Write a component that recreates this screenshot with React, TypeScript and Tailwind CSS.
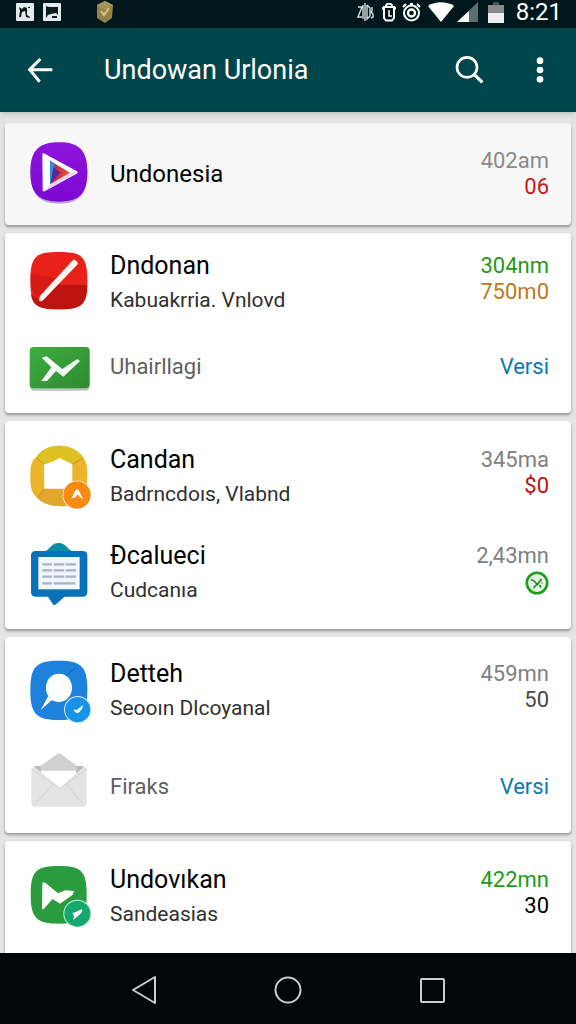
import type { ReactNode } from "react";
import { clsx } from "clsx";

const svgClass = "block size-[60px] overflow-visible";

const PlayIcon = () => (
  <svg viewBox="87 72 180 180" className={svgClass}>
    <defs>
      <linearGradient id="play-bg" x1="0" y1="0" x2="0" y2="1">
        <stop offset="0" stopColor="#8e14dc" />
        <stop offset="1" stopColor="#7c08d2" />
      </linearGradient>
      <linearGradient id="play-core" x1="0" y1="0" x2="1" y2="0">
        <stop offset="0" stopColor="#b3175e" />
        <stop offset="1" stopColor="#f0532a" />
      </linearGradient>
    </defs>
    <path d="M177 73C236 73 262 96 262 160C262 226 236 251 177 251C118 251 92 226 92 160C92 96 118 73 177 73Z" fill="#5a0f96" opacity=".35" />
    <path d="M177 67C236 67 262 90 262 156C262 222 236 245 177 245C118 245 91 222 91 156C91 90 118 67 177 67Z" fill="url(#play-bg)" />
    <path d="M131 104L229 157L132 210Z" fill="#fff" stroke="#fff" strokeWidth="8" strokeLinejoin="round" />
    <path d="M152 192L212 158L231 157L134 213Z" fill="#e5d3f5" />
    <path d="M150 122L210 158L150 193Z" fill="url(#play-core)" />
    <path d="M150 122L164 131L160 165L150 193Z" fill="#2b8fdc" />
    <path d="M160 142L182 158L152 190Z" fill="#5a2a96" />
  </svg>
);

const SlashIcon = () => (
  <svg viewBox="87 54 180 180" className={svgClass}>
    <path d="M177 51C246 51 262 64 262 137C262 208 246 223 177 223C107 223 91 208 91 137C91 64 107 51 177 51Z" fill="#e8211a" />
    <path d="M262 150C261 210 244 223 177 223C118 223 98 214 93 178L124 196L172 150Z" fill="#bd120e" />
    <path d="M92 118C130 120 150 128 176 130L118 184C100 188 92 160 92 118Z" fill="#d61a15" />
    <path d="M219 75C224 72 236 82 233 88L130 195C124 201 114 200 118 190C119 184 122 180 126 176Z" fill="#fff5f3" />
  </svg>
);

const ChartIcon = () => (
  <svg viewBox="87 306 180 180" className={svgClass}>
    <defs>
      <linearGradient id="chart-bg" x1="0" y1="0" x2="1" y2="1">
        <stop offset="0" stopColor="#3fae3f" />
        <stop offset="1" stopColor="#2d8a31" />
      </linearGradient>
    </defs>
    <rect x="91" y="343" width="177" height="124" rx="12" fill="#0b3d0e" opacity=".3" />
    <rect x="89" y="336" width="180" height="124" rx="12" fill="url(#chart-bg)" />
    <path d="M125 368L140 364L187 402L232 372L240 378L190 425L168 408L141 438L124 438L154 397Z" fill="#f4fbf2" />
  </svg>
);

const HouseIcon = () => (
  <svg viewBox="87 66 180 180" className={svgClass}>
    <path d="M175 62C205 61 235 74 249 97C262 110 264 140 261 170C258 205 245 240 200 243C165 245 130 240 112 219C93 205 90 180 91 150C91 125 95 105 108 97C125 72 150 62 175 62Z" fill="#ecb42a" />
    <path d="M108 98C125 72 150 62 175 62C205 61 235 74 249 97L216 117L178 99L132 120Z" fill="#dec224" />
    <path d="M112 217L133 190L200 195L205 243C165 245 130 240 112 219Z" fill="#e2a62c" />
    <path d="M108 98L133 119M250 98L217 118M112 217L134 190" stroke="#c58f1c" strokeWidth="3" />
    <path d="M132 119L160 109L179 99L217 118V191H133Z" fill="#fff" />
    <circle cx="231" cy="210" r="43" fill="#fff" />
    <circle cx="231" cy="210" r="41" fill="#f68a12" />
    <path d="M214 221L227 195Q232 190 236 196L249 221L240 217L232 208L227 217Z" fill="#fff" />
  </svg>
);

const NotesIcon = () => (
  <svg viewBox="87 354 180 180" className={svgClass}>
    <path d="M130 380C148 378 152 354 176 354C200 354 203 378 222 380Z" fill="#0f8ba6" />
    <path d="M107 378H248Q262 378 262 392V500Q262 515 248 515H194L166 539Q162 541 158 537L144 515H107Q93 515 93 500V392Q93 378 107 378Z" fill="#0a72b8" />
    <rect x="115" y="396" width="124" height="97" fill="#f1f7fc" />
    <g stroke="#a9b2c6" strokeWidth="7">
      <path d="M127 418H156M161 418H193M197 418H228M127 436H156M161 436H193M197 436H228M127 455H156M161 455H193M197 455H228M127 475H156M161 475H226" />
    </g>
  </svg>
);

const SearchBubbleIcon = () => (
  <svg viewBox="87 63 180 180" className={svgClass}>
    <path d="M177 62C245 62 262 80 262 150C262 222 246 240 177 240C108 240 91 222 91 150C91 80 108 62 177 62Z" fill="#1e82dd" />
    <path d="M196 110L230 80" stroke="#0c62ad" strokeWidth="3" />
    <path d="M177 101C200 101 216 119 216 143C216 168 198 186 176 186C168 186 160 183 155 181L122 210L145 168C139 160 138 152 138 143C138 119 154 101 177 101Z" fill="#fff" />
    <circle cx="233" cy="209" r="41" fill="#d6efff" />
    <circle cx="233" cy="209" r="38" fill="#1893e8" />
    <path d="M221 208L230 210L249 195L246 208L234 220Q224 219 221 208Z" fill="#fff" />
  </svg>
);

const EnvelopeIcon = () => (
  <svg viewBox="87 351 180 180" className={svgClass}>
    <path d="M103 378L123 378V400L103 388ZM228 378H250V390L228 400Z" fill="#b9b9b9" />
    <path d="M122 378L172 341Q177 338 182 341L230 378V394H122Z" fill="#d0d0d0" />
    <path d="M122 392H230L180 444Z" fill="#fff" />
    <path d="M94 392Q94 380 105 382L180 443L250 382Q260 380 260 390V488Q260 500 248 500H106Q94 500 94 488Z" fill="#e3e3e3" />
    <path d="M104 494L158 434M250 494L200 432" stroke="#d2d2d2" strokeWidth="3" />
    <path d="M96 388L180 445L258 388" fill="none" stroke="#d4d4d4" strokeWidth="3" />
  </svg>
);

const ArrowIcon = () => (
  <svg viewBox="87 81 180 180" className={svgClass}>
    <path d="M177 78C240 78 260 90 260 162C260 236 244 251 177 251C110 251 92 236 92 162C92 90 112 78 177 78Z" fill="#2a9c3f" />
    <path d="M127 130Q130 124 136 128L174 160L196 151L222 153L218 164L180 191L158 177L131 207L126 208Z" fill="#fff" />
    <circle cx="232" cy="221" r="42" fill="#c5f2de" />
    <circle cx="232" cy="221" r="39" fill="#16a86c" />
    <path d="M217 219L226 217L245 208Q250 214 240 223L220 240L222 228Z" fill="#fff" />
  </svg>
);

const CheckMark = () => (
  <svg viewBox="0 0 24 24" role="img" aria-label="Done" className="my-px inline-block size-6">
    <circle cx="12" cy="12" r="10.2" fill="#e4f7e2" stroke="#1f9a27" strokeWidth="2.6" />
    <path d="M6 9.5Q8 8 10 11L12.5 13.5L16.5 8M12 13L8.5 17M14.5 14L16 16.5M17 11.5V12.5" fill="none" stroke="#27802b" strokeWidth="1.6" />
  </svg>
);

interface Item {
  icon: ReactNode;
  title: string;
  subtitle?: string;
  muted?: boolean;
  top?: string;
  topColor?: string;
  bottom?: ReactNode;
  bottomColor?: string;
  action?: string;
}

const cards: { className: string; items: Item[] }[] = [
  {
    className: "bg-[#f7f7f7] py-[17px]",
    items: [
      { icon: <PlayIcon />, title: "Undonesia", top: "402am", topColor: "text-[#8a8a8a]", bottom: "06", bottomColor: "text-[#cc1616]" },
    ],
  },
  {
    className: "bg-white gap-4 pt-4 pb-3",
    items: [
      { icon: <SlashIcon />, title: "Dndonan", subtitle: "Kabuakrria. Vnlovd", top: "304nm", topColor: "text-[#1f9a14]", bottom: "750m0", bottomColor: "text-[#c07a1c]" },
      { icon: <ChartIcon />, title: "Uhairllagi", muted: true, action: "Versi" },
    ],
  },
  {
    className: "bg-white gap-7 py-[22px]",
    items: [
      { icon: <HouseIcon />, title: "Candan", subtitle: "Badrncdoıs, Vlabnd", top: "345ma", topColor: "text-[#808080]", bottom: "$0", bottomColor: "text-[#bd1212]" },
      { icon: <NotesIcon />, title: "Đcalueci", subtitle: "Cudcanıa", top: "2,43mn", topColor: "text-[#808080]", bottom: <CheckMark /> },
    ],
  },
  {
    className: "bg-white gap-7 pt-5 pb-3",
    items: [
      { icon: <SearchBubbleIcon />, title: "Detteh", subtitle: "Seooın Dlcoyanal", top: "459mn", topColor: "text-[#808080]", bottom: "50", bottomColor: "text-[#4a4a4a]" },
      { icon: <EnvelopeIcon />, title: "Firaks", muted: true, action: "Versi" },
    ],
  },
  {
    className: "bg-white pt-[22px] pb-8",
    items: [
      { icon: <ArrowIcon />, title: "Undovıkan", subtitle: "Sandeasias", top: "422mn", topColor: "text-[#1f9a14]", bottom: "30", bottomColor: "text-black" },
    ],
  },
];

function Row({ item }: { item: Item }) {
  return (
    <li className="flex min-h-[68px] items-center gap-[21px]">
      <div className="shrink-0">{item.icon}</div>
      <div className="min-w-0 flex-1">
        <h2
          className={clsx(
            "truncate leading-[34px]",
            item.muted ? "text-[22px] text-[#606060]" : item.subtitle ? "text-[25px] text-black" : "text-2xl text-black"
          )}
        >
          {item.title}
        </h2>
        {item.subtitle && <p className="truncate text-[21px] leading-[34px] text-[#303030]">{item.subtitle}</p>}
      </div>
      {item.action ? (
        <button type="button" className="text-[22px] leading-[34px] text-[#0c79b5]">{item.action}</button>
      ) : (
        <div className={clsx("text-right text-[22px] leading-[26px]", item.subtitle && "self-start pt-1")}>
          <p className={item.topColor}>{item.top}</p>
          <p className={item.bottomColor}>{item.bottom}</p>
        </div>
      )}
    </li>
  );
}

function StatusBar() {
  return (
    <div className="flex h-7 shrink-0 items-center justify-between bg-[#00171b] pr-[14px] pb-1 pl-4 text-white">
      <div className="flex items-center">
        <svg viewBox="0 0 18 18" className="size-[18px]">
          <rect width="18" height="18" rx="1" fill="#e3eaee" />
          <path d="M3 4L6 6L8 4L11 5V12L14 14V15L10 14L9 8L6 9L5 14H3L4 8ZM12 4H14V5H12Z" fill="#101b20" />
        </svg>
        <svg viewBox="0 0 18 18" className="ml-[9px] size-[18px]">
          <rect width="18" height="18" rx="1" fill="#e3eaee" />
          <path d="M3 3L6 4H15V12L13 10L8 11L5 12L3 15ZM9 13H14V15H9Z" fill="#101b20" />
        </svg>
        <svg viewBox="0 0 18 22" className="ml-[35px] h-[22px] w-[18px]">
          <path d="M9 0L17 4L16 17L9 22L1 17V4Z" fill="#94824a" />
          <path d="M9 0L17 4L9 9L1 4Z" fill="#a8955a" />
          <path d="M5 10L8 14L13 7" fill="none" stroke="#d3c084" strokeWidth="2" />
        </svg>
      </div>
      <div className="flex items-center">
        <svg viewBox="0 0 17 20" className="h-5 w-[17px]" fill="none" stroke="#d5dee0" strokeWidth="1.4">
          <path d="M1 5H5L1 15H5M6 3V17M8 1V19M10 3V17L13 14V6L10 3M15 5V9L14 10L16 12V15L14 16" />
        </svg>
        <svg viewBox="0 0 14 19" className="ml-[8px] h-[19px] w-[14px]">
          <path d="M2 4H12V15L10 17.5H4L2 15ZM4 3C4 0 10 0 10 3M0 6L2 4M14 6L12 4" fill="none" stroke="#fff" strokeWidth="2" />
          <path d="M7 7V13H10" fill="none" stroke="#fff" strokeWidth="1.5" />
        </svg>
        <svg viewBox="0 0 19 20" className="ml-[6px] h-5 w-[19px]" fill="none" stroke="#fff">
          <circle cx="9.5" cy="11" r="7.5" strokeWidth="2" />
          <circle cx="9.5" cy="11" r="3.5" strokeWidth="2.4" />
          <path d="M1 5L4 2M15 2L18 5M8 2H11" strokeWidth="2" />
        </svg>
        <svg viewBox="0 0 26 20" className="ml-[7px] h-5 w-[26px]">
          <path d="M0 4C7 -1 19 -1 26 4L13 20Z" fill="#fff" />
        </svg>
        <svg viewBox="0 0 21 20" className="ml-[3px] h-5 w-[21px]">
          <path d="M21 0V20H0Z" fill="#5d6e72" />
          <path d="M12 9V20H0Z" fill="#fff" />
        </svg>
        <svg viewBox="0 0 16 21" className="ml-[10px] h-[21px] w-4">
          <path d="M0 3H16V21H0Z" fill="#87898a" />
          <path d="M0 11H16V21H0Z" fill="#f2eeee" />
          <path d="M5 0H11V3H5Z" fill="#3c5658" />
        </svg>
        <span className="ml-3 text-2xl leading-6">8:21</span>
      </div>
    </div>
  );
}

function AppBar() {
  return (
    <header className="z-10 flex h-[84px] shrink-0 items-center bg-[#00464b] px-6 text-white shadow-md">
      <button type="button" aria-label="Back">
        <svg viewBox="72 162 96 96" className="size-8" fill="none" stroke="#fff" strokeWidth="9">
          <path d="M157 209H90M121 177L89 209L119 245" />
        </svg>
      </button>
      <h1 className="ml-12 flex-1 truncate text-[27px] leading-9">Undowan Urlonia</h1>
      <div className="flex gap-11">
        <button type="button" aria-label="Search">
          <svg viewBox="498 165 90 90" className="size-[30px]" fill="none" stroke="#fff" strokeWidth="8">
            <circle cx="537" cy="202" r="30" />
            <path d="M559 224L583 247" strokeWidth="10" />
          </svg>
        </button>
        <button type="button" aria-label="More options">
          <svg viewBox="719 165 72 90" className="h-[30px] w-6" fill="#fff">
            <circle cx="755" cy="182" r="10" />
            <circle cx="755" cy="210" r="10" />
            <circle cx="755" cy="238" r="10" />
          </svg>
        </button>
      </div>
    </header>
  );
}

function NavBar() {
  return (
    <nav className="z-10 flex h-[71px] shrink-0 items-center justify-center bg-[#00080a]">
      <button type="button" aria-label="Back" className="flex w-1/4 justify-center">
        <svg viewBox="0 0 28 30" className="h-[30px] w-7" fill="none" stroke="#c9cdcd" strokeWidth="2" strokeLinejoin="round">
          <path d="M3 16L25 3V29Z" />
        </svg>
      </button>
      <button type="button" aria-label="Home" className="flex w-1/4 justify-center">
        <svg viewBox="0 0 30 30" className="size-[30px]" fill="none" stroke="#c9cdcd" strokeWidth="2">
          <circle cx="15" cy="16" r="12.5" />
        </svg>
      </button>
      <button type="button" aria-label="Recent apps" className="flex w-1/4 justify-center">
        <svg viewBox="0 0 30 30" className="size-[30px]" fill="none" stroke="#c9cdcd" strokeWidth="2">
          <rect x="4" y="5" width="23" height="23" rx="1" />
        </svg>
      </button>
    </nav>
  );
}

export default function App() {
  return (
    <div className="flex h-screen flex-col bg-[#e4e4e5] font-['Roboto',sans-serif]">
      <StatusBar />
      <AppBar />
      <main className="flex min-h-0 flex-1 flex-col gap-2 overflow-hidden px-[5px] pt-[11px]">
        {cards.map((card, index) => (
          <ul
            key={index}
            className={clsx("flex shrink-0 flex-col rounded-sm pr-[22px] pl-6 shadow-[0_2px_3px_rgba(0,0,0,0.35)]", card.className)}
          >
            {card.items.map((item) => (
              <Row key={item.title} item={item} />
            ))}
          </ul>
        ))}
      </main>
      <NavBar />
    </div>
  );
}
